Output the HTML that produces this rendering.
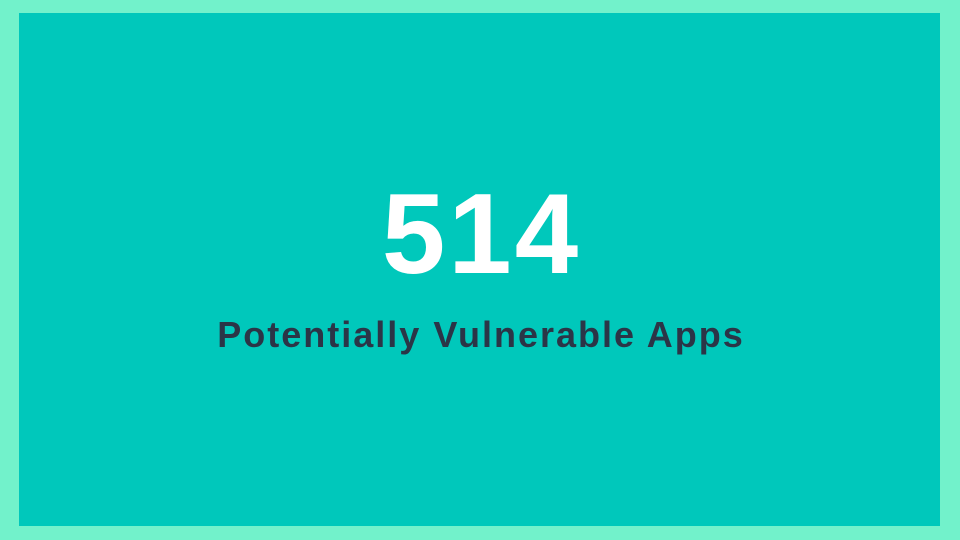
<!DOCTYPE html>
<html><head><style>
html,body{margin:0;padding:0;}
body{width:960px;height:540px;background:#72f2cb;position:relative;overflow:hidden;font-family:"Liberation Sans",sans-serif;}
.box{position:absolute;left:19px;top:13px;width:921px;height:513px;background:#00c8bb;}
.num{position:absolute;left:0;width:960px;top:170px;text-align:center;color:#fff;font-weight:bold;font-size:114px;line-height:130px;letter-spacing:3px;text-indent:3px;}
.sub{position:absolute;left:0;width:960px;top:313px;text-align:center;color:#2b3547;font-weight:bold;font-size:36px;line-height:44px;letter-spacing:2px;text-indent:2px;}
</style></head><body>
<div class="box"></div>
<div class="num">514</div>
<div class="sub">Potentially Vulnerable Apps</div>
</body></html>
